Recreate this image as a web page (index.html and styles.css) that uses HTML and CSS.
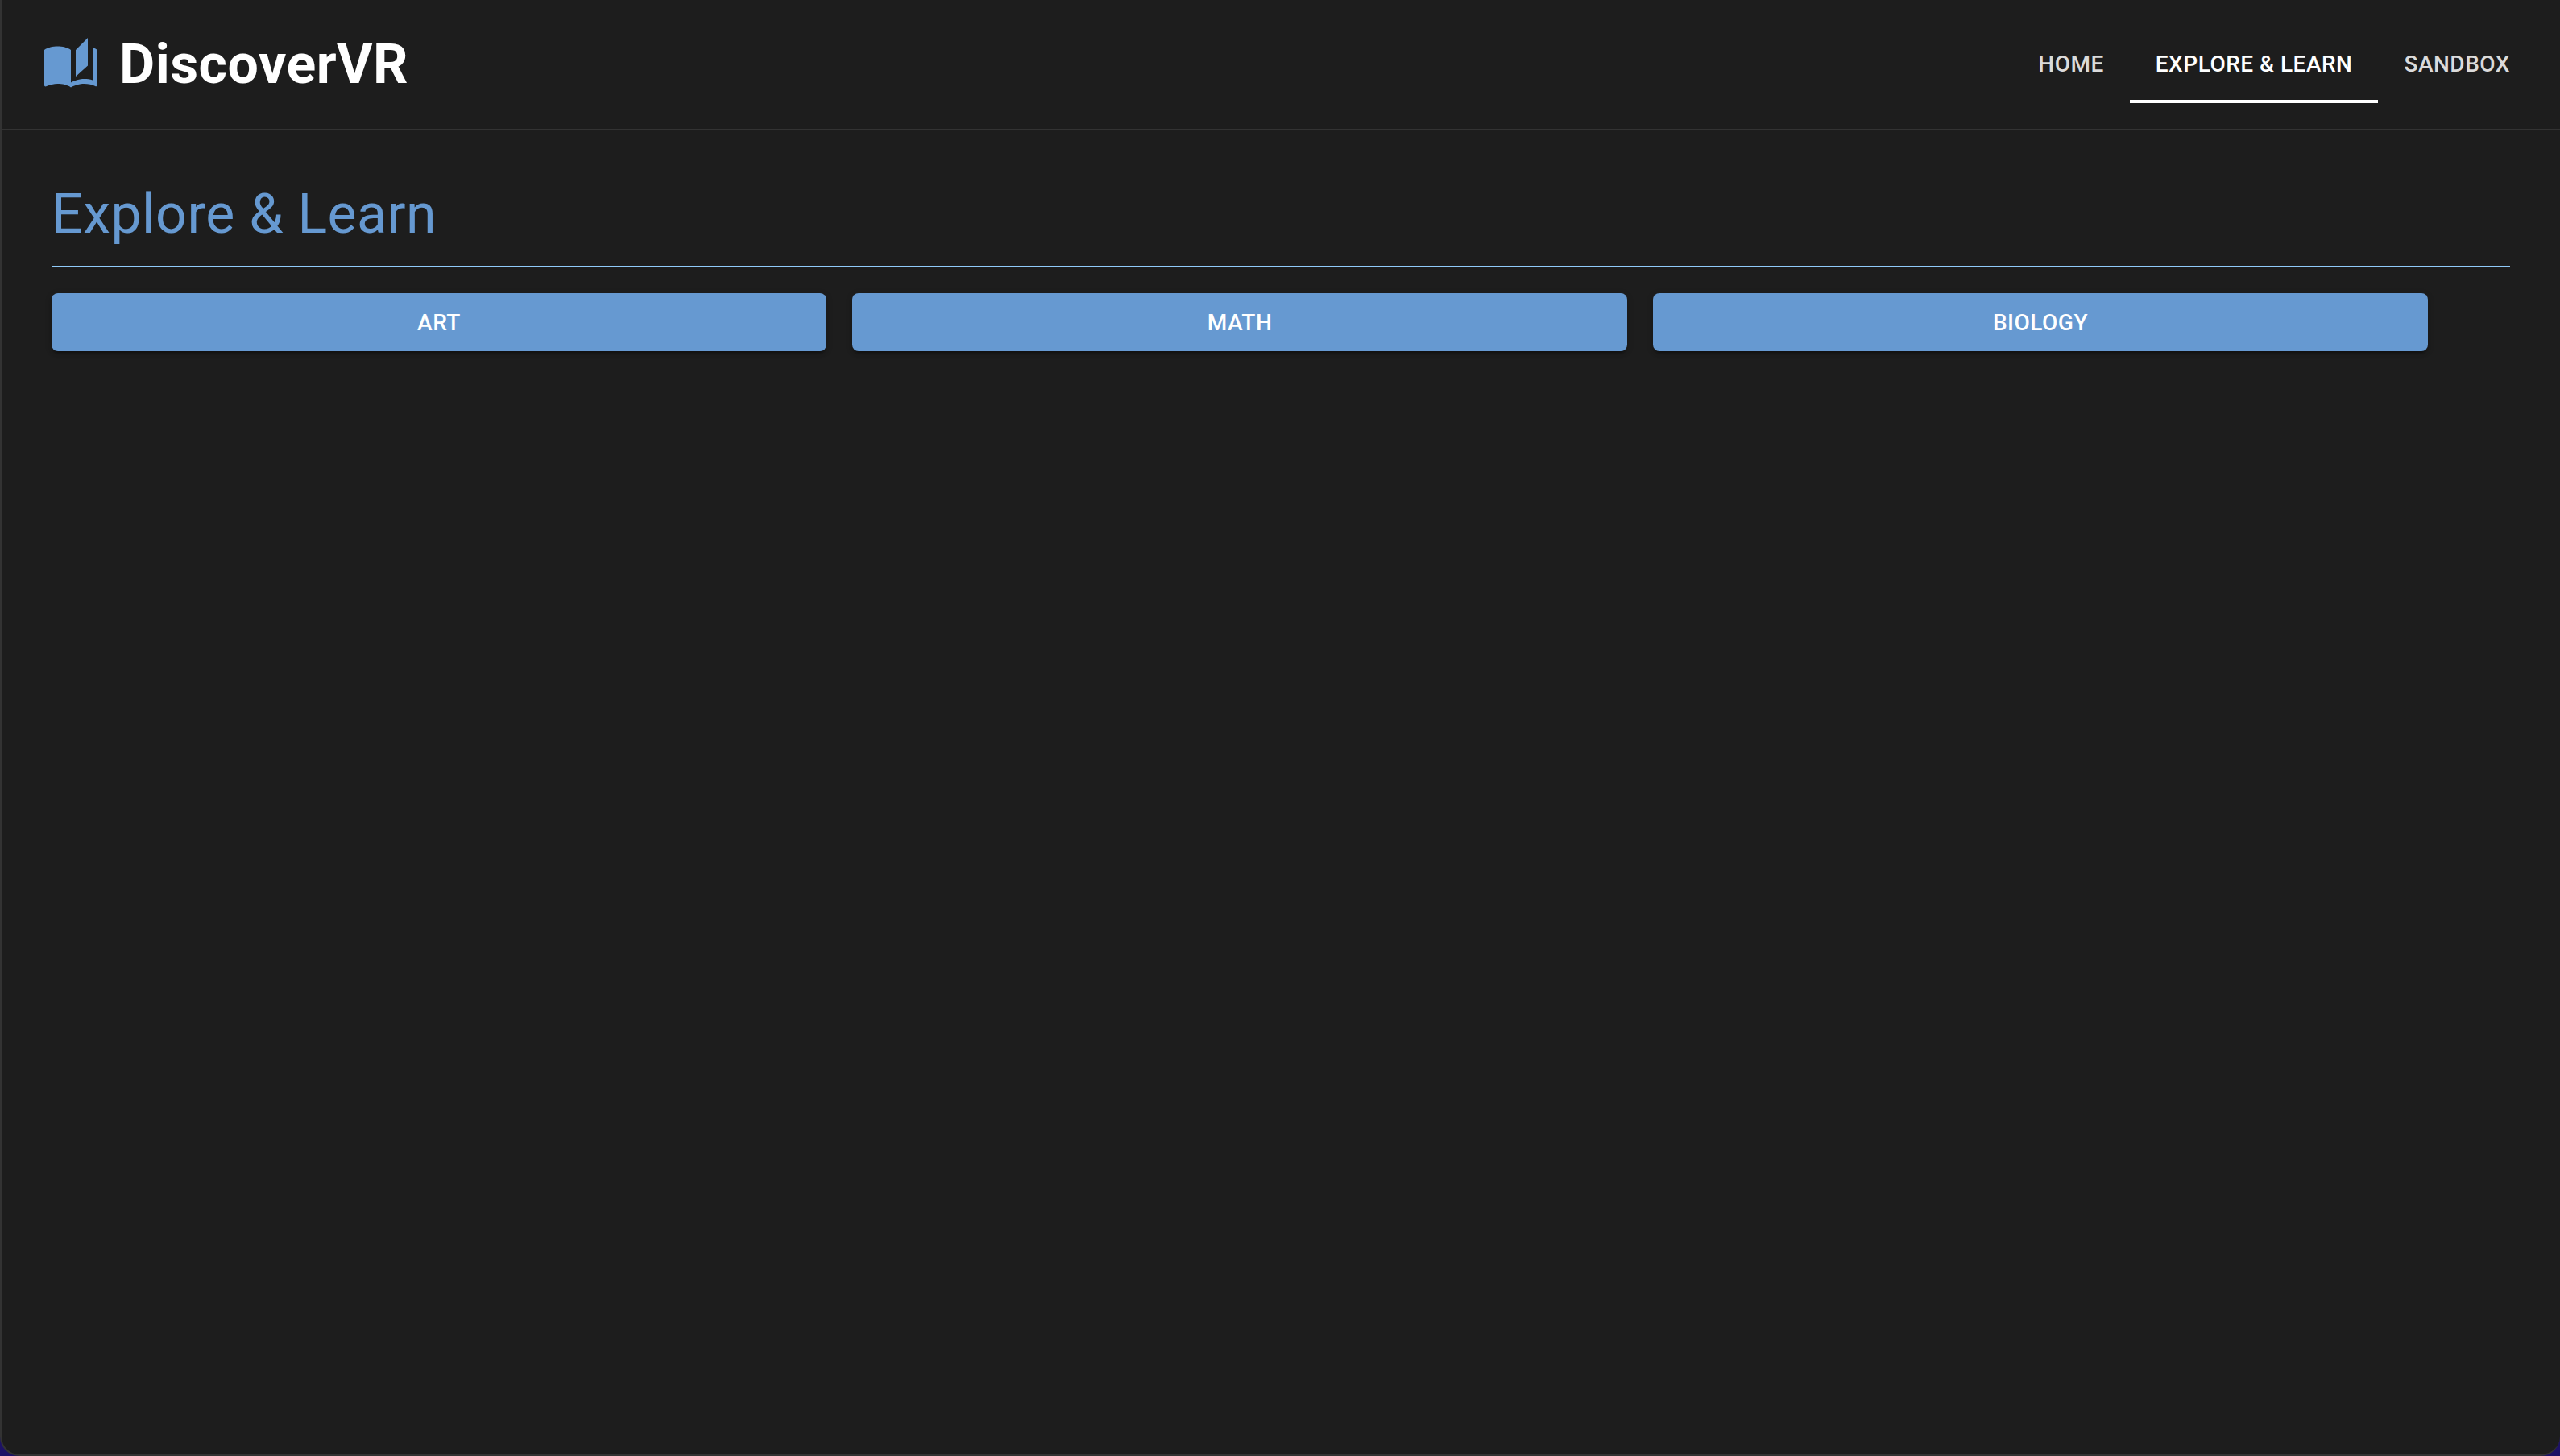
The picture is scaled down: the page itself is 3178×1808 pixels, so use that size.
FILE: index.html
```html
<!DOCTYPE html>
<html lang="en">
<head>
<meta charset="utf-8">
<title>DiscoverVR</title>
<link rel="stylesheet" href="styles.css">
</head>
<body>
<div class="app">
  <header class="topbar">
    <a class="brand" href="#">
      <svg class="brand-icon" viewBox="0 0 24 24" aria-hidden="true"><path d="M19 1l-5 5v11l5-4.5V1zM1 6v14.65c0 .25.25.5.5.5.1 0 .15-.05.25-.05C3.1 20.45 5.05 20 6.5 20c1.95 0 4.05.4 5.5 1.5V6c-1.45-1.1-3.55-1.5-5.5-1.5S2.45 4.9 1 6zm22 13.5V6c-.6-.45-1.25-.75-2-1v13.5c-1.1-.35-2.3-.5-3.5-.5-1.7 0-4.15.65-5.5 1.5v2c1.35-.85 3.8-1.5 5.5-1.5 1.65 0 3.35.3 4.75 1.05.1.05.15.05.25.05.25 0 .5-.25.5-.5v-1.1z"/></svg>
      <span class="brand-name">DiscoverVR</span>
    </a>
    <nav class="tabs">
      <a class="tab" href="#">Home</a>
      <a class="tab tab-active" href="#">Explore &amp; Learn</a>
      <a class="tab" href="#">Sandbox</a>
    </nav>
  </header>
  <main class="content">
    <h1 class="page-title">Explore &amp; Learn</h1>
    <div class="topics">
      <button class="topic">Art</button>
      <button class="topic">Math</button>
      <button class="topic">Biology</button>
    </div>
  </main>
</div>
</body>
</html>
```
FILE: styles.css
```css
* { box-sizing: border-box; }
html, body { margin: 0; height: 100%; }
body {
  background: #1d1266;
  font-family: Roboto, "Liberation Sans", sans-serif;
}
.app {
  height: 1808px;
  background: #1d1d1d;
  border-left: 2px solid #333;
  border-bottom: 2px solid #333;
  border-radius: 0 0 24px 24px;
  overflow: hidden;
}
.topbar {
  height: 162px;
  border-bottom: 2px solid #333;
  display: flex;
  align-items: flex-start;
  justify-content: space-between;
  padding: 0 30px 0 50px;
}
.brand {
  display: flex;
  align-items: center;
  gap: 24px;
  height: 160px;
  text-decoration: none;
}
.brand-icon { width: 72px; height: 72px; fill: #6699d1; }
.brand-name {
  color: #fff;
  font-size: 68px;
  font-weight: 700;
  line-height: 1;
  letter-spacing: 0.5px;
}
.tabs { display: flex; gap: 0; padding-top: 32px; }
.tab {
  height: 96px;
  padding: 2px 32px 0;
  display: flex;
  align-items: center;
  color: rgba(255, 255, 255, 0.85);
  font-size: 28px;
  font-weight: 470;
  letter-spacing: 0.5px;
  text-transform: uppercase;
  text-decoration: none;
  border-bottom: 4px solid transparent;
}
.tab-active { color: #fff; border-bottom-color: #fff; }
.content { padding: 64px 62px 0; }
.page-title {
  margin: 0;
  height: 106px;
  color: #6699d1;
  font-size: 68px;
  font-weight: 400;
  line-height: 80px;
  letter-spacing: 0.5px;
  border-bottom: 2px solid #90caf9;
}
.topics { display: flex; gap: 32px; margin-top: 32px; }
.topic {
  width: 962px;
  height: 72px;
  border: 0;
  border-radius: 8px;
  background: #6699d1;
  color: #fff;
  font-family: inherit;
  font-size: 28px;
  font-weight: 470;
  letter-spacing: 0.5px;
  text-transform: uppercase;
  box-shadow: 0 6px 2px -4px rgba(0,0,0,.2), 0 4px 4px 0 rgba(0,0,0,.14), 0 2px 10px 0 rgba(0,0,0,.12);
}
```
